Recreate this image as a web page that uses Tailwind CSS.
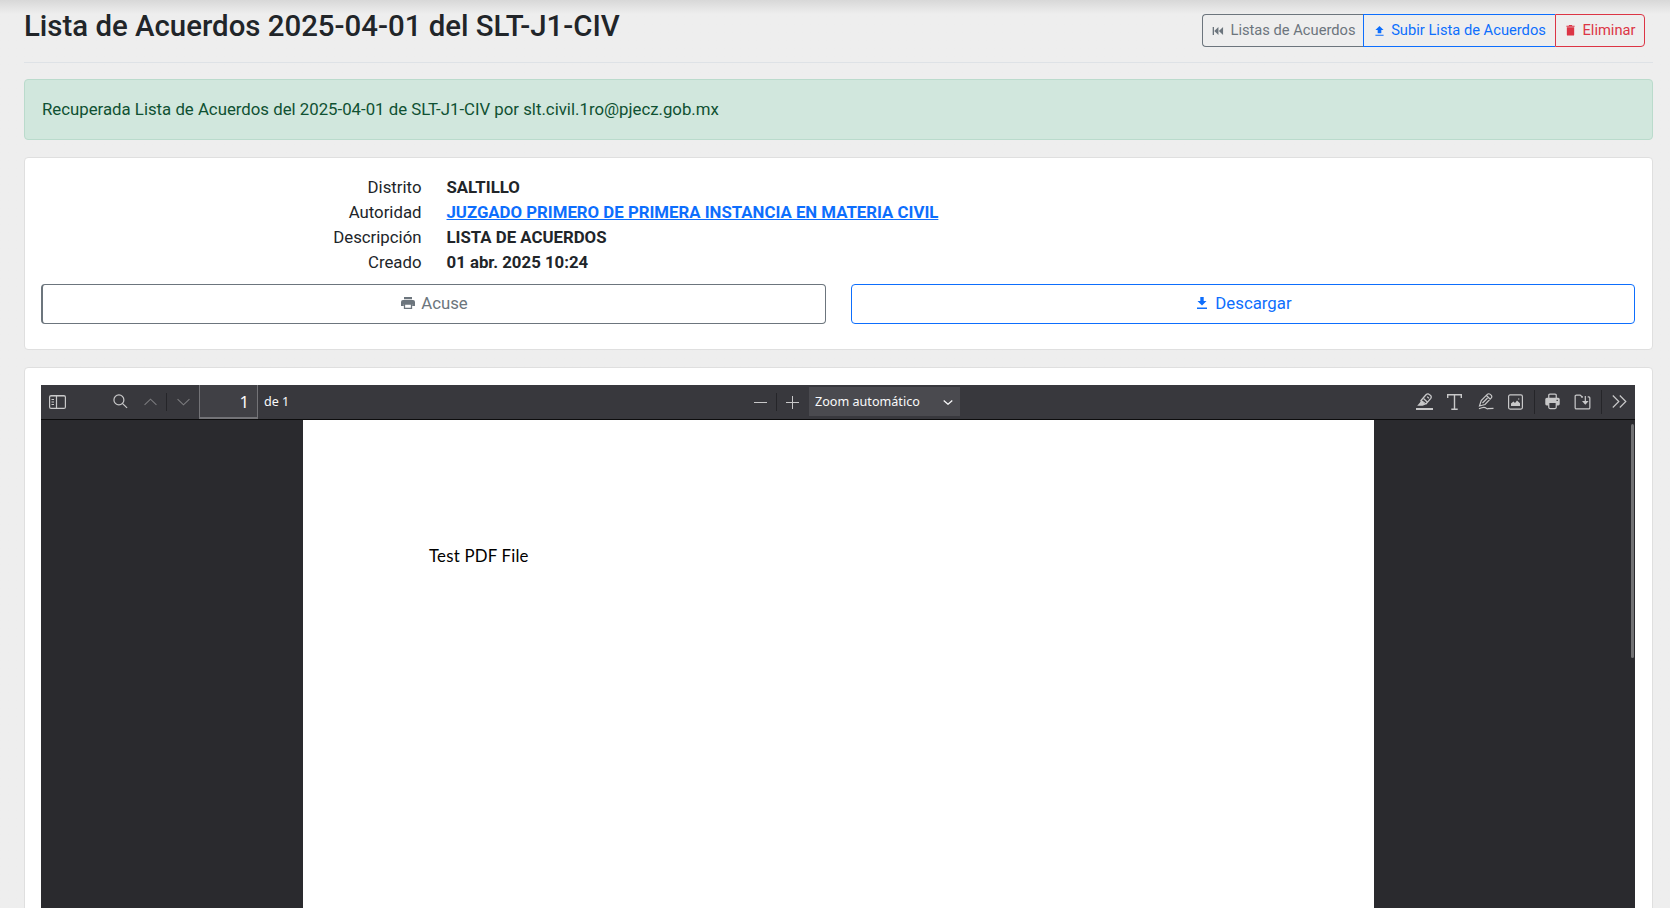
<!DOCTYPE html>
<html lang="es">
<head>
<meta charset="utf-8">
<title>Lista de Acuerdos</title>
<script src="https://cdn.jsdelivr.net/npm/@tailwindcss/browser@4"></script>
</head>
<body class="h-[908px] overflow-hidden bg-[#eeeeee] font-['Roboto',sans-serif] text-[16.8px] leading-[25.2px] text-[#212529]">
<div class="flex h-[908px] flex-col overflow-hidden bg-linear-to-b from-[#d8d8d8] to-[#eeeeee] to-[14px] pr-[17px] pl-6">
  <header class="flex h-[63px] shrink-0 items-start justify-between border-b border-[#dee2e6]">
    <h1 class="mt-[9px] text-[29.4px] leading-[35px] font-medium whitespace-nowrap">Lista de Acuerdos 2025-04-01 del SLT-J1-CIV</h1>
    <div class="mt-[14px] mr-[8px] flex h-[33px] text-[14.7px] leading-[31px] whitespace-nowrap">
      <a class="flex w-[161px] items-center justify-center gap-[6px] rounded-l-[4px] border border-r-0 border-[#6c757d] pl-[2px] text-[#6c757d]">
        <svg class="h-[8px] w-[12px]" viewBox="0 0 12 9" fill="currentColor"><path d="M0 0h1.500v9H0zM6.500 0v9L1.800 4.500zM11.700 0v9L7 4.500z"/></svg>Listas de Acuerdos</a>
      <a class="flex w-[192px] items-center justify-center gap-[7px] border border-r-0 border-[#0d6efd] pl-[2px] text-[#0d6efd]">
        <svg class="h-[10px] w-[9px]" viewBox="0 0 9 11" fill="currentColor"><path d="M4.5 0L9 4.500H6.500V8h-4V4.500H0zM0 9.500h9v1.300H0z"/></svg>Subir Lista de Acuerdos</a>
      <a class="flex w-[90px] items-center justify-center gap-[7px] rounded-r-[4px] border border-[#dc3545] pl-[2px] text-[#dc3545]">
        <svg class="h-[11px] w-[9px]" viewBox="0 0 9 12" fill="currentColor"><path d="M0 .8h2.500L3 0h3l.5.800H9V2H0zM.5 2.500h8V10.500q0 1-1 1h-6q-1 0-1-1z"/></svg>Eliminar</a>
    </div>
  </header>
  <div class="mt-4 flex h-[61px] shrink-0 items-center rounded-[4px] border border-[#badbcc] bg-[#d1e7dd] px-[17px] text-[#0f5132]">Recuperada Lista de Acuerdos del 2025-04-01 de SLT-J1-CIV por slt.civil.1ro@pjecz.gob.mx</div>
  <section class="mt-[17px] h-[193px] shrink-0 rounded-[4px] border border-[#dfdfdf] bg-white pt-[16.500px] pr-[17px] pl-[16px]">
    <dl class="grid grid-cols-[380.500px_1fr] gap-x-[25px]">
      <dt class="text-right">Distrito</dt><dd class="font-bold">SALTILLO</dd>
      <dt class="text-right">Autoridad</dt><dd class="font-bold"><a class="text-[#0d6efd] underline">JUZGADO PRIMERO DE PRIMERA INSTANCIA EN MATERIA CIVIL</a></dd>
      <dt class="text-right">Descripción</dt><dd class="font-bold">LISTA DE ACUERDOS</dd>
      <dt class="text-right">Creado</dt><dd class="font-bold">01 abr. 2025 10:24</dd>
    </dl>
    <div class="mt-[8.500px] grid grid-cols-[785px_784px] gap-[25px]">
      <a class="flex h-[40px] items-center justify-center gap-[6px] rounded-[4px] border border-l-2 border-[#6c757d] pl-px text-[#6c757d]">
        <svg class="mb-px h-[12px] w-[14px]" viewBox="0 0 14 12" fill="currentColor"><path d="M3 0h8v2.300H3zM2 3h10q2 0 2 2v4h-2.800V7H2.800v2H0V5q0-2 2-2z"/><path d="M3.500 7h7v4.500h-7z" fill="none" stroke="currentColor" stroke-width="1.300"/></svg>Acuse</a>
      <a class="flex h-[40px] items-center justify-center gap-[8px] rounded-[4px] border border-[#0d6efd] pl-[3px] text-[#0d6efd]">
        <svg class="mb-[2px] h-[12px] w-[10px]" viewBox="0 0 10 12" fill="currentColor"><path d="M3.300 0h3.400v4H9.500L5 8.500.5 4h2.800zM0 10.500h10V12H0z"/></svg>Descargar</a>
    </div>
  </section>
  <section class="mt-[17px] h-[560px] shrink-0 rounded-[4px] border border-[#dfdfdf] bg-white pt-[17px] pr-[17px] pl-[16px]">
    <div class="h-[560px] bg-[#2a2a2e] font-['Noto_Sans',sans-serif]">
      <div class="flex h-[35px] border-b border-[#0c0c0d] bg-[#38383d] text-[#f9f9fa]">
        <div class="flex w-[713px] items-center pl-[8px] pb-px">
          <svg class="h-[14px] w-[17px] text-[#c8c8c9]" viewBox="0 0 17 14" fill="none" stroke="currentColor"><rect x=".6" y=".6" width="15.800" height="12.800" rx="1.500" stroke-width="1.200"/><path d="M7.500 1v12" stroke-width="1.200"/><path d="M2.500 4.500H5M2.500 7H5M2.500 9.500H5"/><path d="M1 1.500h15" stroke-width=".8" opacity=".5"/></svg>
          <svg class="ml-[47px] h-[15px] w-[15px] text-[#c8c8c9]" viewBox="0 0 16 16" fill="none" stroke="currentColor" stroke-width="1.300"><circle cx="6.300" cy="6.300" r="5.300"/><path d="M10 10l5 4.800"/></svg>
          <svg class="ml-[16px] h-[8px] w-[13px] text-[#7b7b7e]" viewBox="0 0 14 8" fill="none" stroke="currentColor" stroke-width="1.200"><path d="M.6 7.200L7 1l6.400 6.200"/></svg>
          <div class="ml-[9px] h-[18px] w-px bg-[#252529]"></div>
          <svg class="ml-[10px] h-[8px] w-[13px] text-[#7b7b7e]" viewBox="0 0 14 8" fill="none" stroke="currentColor" stroke-width="1.200"><path d="M.6.800L7 7l6.400-6.200"/></svg>
          <div class="ml-[9px] h-[34px] w-[59px] self-start border-x border-b-2 border-[#737377] bg-[#404045] pr-[8px] text-right text-[16.800px] leading-[33px]">1</div>
          <span class="ml-[6px] text-[12.600px]">de 1</span>
        </div>
        <div class="flex w-[661px] items-center pb-px">
          <svg class="h-[14px] w-[13px] text-[#c8c8c9]" viewBox="0 0 13 14" stroke="currentColor"><path d="M0 7.500h13"/></svg>
          <div class="ml-[9px] h-[18px] w-px bg-[#252529]"></div>
          <svg class="ml-[9px] h-[14px] w-[13px] text-[#c8c8c9]" viewBox="0 0 13 14" stroke="currentColor"><path d="M0 7.500h13M6.500 1v13"/></svg>
          <div class="ml-[10px] flex h-[29px] w-[151px] items-center justify-between bg-[#4a4a4f] pr-[7px] pl-[6px] text-[12.600px]"><span>Zoom automático</span>
            <svg class="mt-[2px] h-[5px] w-[10px]" viewBox="0 0 10 5" fill="none" stroke="currentColor" stroke-width="1.200"><path d="M.7.500L5 4.300 9.300.500"/></svg></div>
        </div>
        <div class="flex items-center pb-px text-[#c8c8c9]">
          <svg class="ml-px h-[17px] w-[17px]" viewBox="0 0 17 17" fill="none" stroke="currentColor" stroke-width="1.300"><path d="M0 16h17" stroke-width="2"/><path d="M5 7.500l5-5.700q1.300-1.300 2.800-.6l1.800 1.300q1.200 1.300.2 2.800L10 11z"/><path d="M7.500 5.500l4 3.700M11.200 3.600l1.600 1.600"/><path d="M5 7.500l4.800 4-3.300 1.300H1.200l2.600-3z" fill="currentColor" stroke="none"/></svg>
          <svg class="ml-[14px] h-[16px] w-[15px]" viewBox="0 0 15 16" fill="none" stroke="currentColor" stroke-width="1.400"><path d="M.7 4V.8h13.600V4M7.500 1v14M4.300 15.200h6.400"/></svg>
          <svg class="ml-[16px] h-[17px] w-[16px]" viewBox="0 0 16 17" fill="none" stroke="currentColor" stroke-width="1.200"><path d="M1.500 13l1.700-5.500L9.500 1.200q1.300-1 2.800.2l1 1q1 1.300 0 2.500L7 11.500zM8.500 2.500l4 4M4.500 10l5-5"/><path d="M1 15.800q5-2.300 6.500-1t2.500.9l5.500-.4"/></svg>
          <svg class="ml-[14px] h-[16px] w-[15px]" viewBox="0 0 15 16" fill="none" stroke="currentColor" stroke-width="1.200"><rect x=".6" y=".9" width="13.800" height="14.200" rx="1.500"/><path d="M3 12V9.500L5.500 7.500 7 9l2-2.500 3 2.700V12z" fill="currentColor" stroke="none"/><path d="M10 5h1.300"/></svg>
          <div class="ml-[11px] h-[24px] w-px bg-[#252529]"></div>
          <svg class="ml-[10px] h-[17px] w-[15px]" viewBox="0 0 16 17" fill="none" stroke="currentColor" stroke-width="1.300"><path d="M4 5V2q0-1.300 1.300-1.300h5.400Q12 .7 12 2v3"/><path d="M2 4.500h12q1.700 0 1.700 1.700v5q0 1.500-1.500 1.500H12V10H4v2.700H1.800q-1.500 0-1.500-1.500v-5q0-1.700 1.700-1.700z" fill="currentColor" stroke="none"/><path d="M4 10v4.700q0 1.300 1.300 1.300h5.400q1.300 0 1.300-1.300V10"/><path d="M12.300 7.200h1.400" stroke="#38383d"/></svg>
          <svg class="ml-[14px] h-[16px] w-[17px]" viewBox="0 0 17 17" fill="none" stroke="currentColor" stroke-width="1.300"><path d="M8 4V3L6 1.200H2Q.7 1.200.7 2.500v12q0 1.300 1.300 1.300h13q1.300 0 1.300-1.300v-10Q16.300 3 15 3h-1M7 3h2"/><path d="M11.500 2v8" /><path d="M8 7.500h7l-3.500 4z" fill="currentColor" stroke="none"/></svg>
          <div class="ml-[10px] h-[24px] w-px bg-[#252529]"></div>
          <svg class="ml-[10px] h-[13px] w-[15px]" viewBox="0 0 15 13" fill="none" stroke="currentColor" stroke-width="1.200"><path d="M.8.500l6 6-6 6M7.800.500l6 6-6 6"/></svg>
        </div>
      </div>
      <div class="flex h-[525px] justify-between">
        <div class="ml-[262px] w-[1071px] bg-white pt-[123px] pl-[126px] font-['Lato',sans-serif] text-[16.800px] tracking-[0.220px] text-black"><p class="leading-[25px]">Test PDF File</p></div>
        <div class="mt-[4px] mr-px h-[234px] w-[3px] rounded-full bg-[#727274]"></div>
      </div>
    </div>
  </section>
</div>
</body>
</html>
